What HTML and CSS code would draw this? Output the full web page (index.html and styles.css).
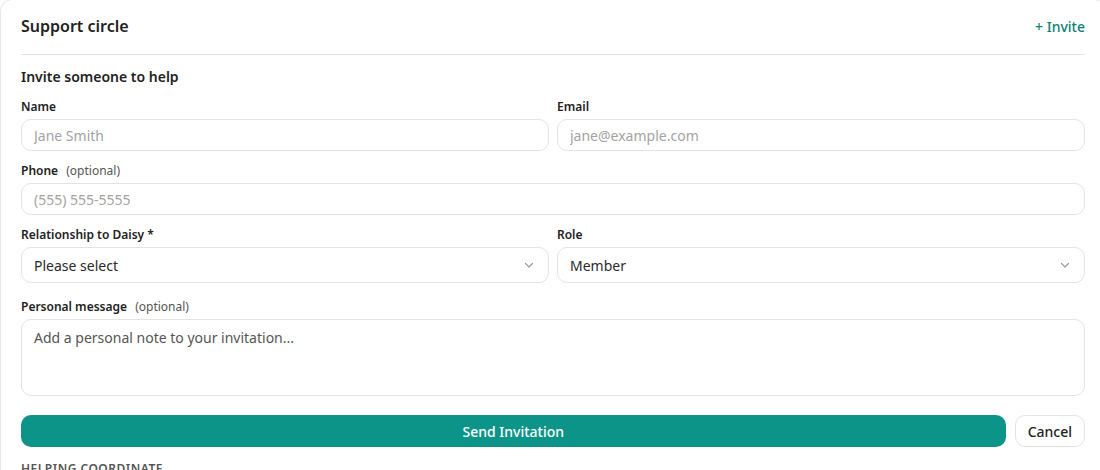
FILE: index.html
```html
<!DOCTYPE html>
<html lang="en">
<head>
    <meta charset="UTF-8">
    <title>Support circle</title>
    <link rel="stylesheet" href="styles.css">
</head>
<body>
    <div class="card">
        <div class="card-head">
            <h2>Support circle</h2>
            <a class="invite-link" href="#">+ Invite</a>
        </div>

        <form class="invite-form">
            <h3>Invite someone to help</h3>

            <div class="row two">
                <div class="field">
                    <label for="name">Name</label>
                    <input id="name" type="text" placeholder="Jane Smith">
                </div>
                <div class="field">
                    <label for="email">Email</label>
                    <input id="email" type="email" placeholder="jane@example.com">
                </div>
            </div>

            <div class="field">
                <label for="phone">Phone <span class="opt">(optional)</span></label>
                <input id="phone" type="tel" placeholder="(555) 555-5555">
            </div>

            <div class="row two selects">
                <div class="field">
                    <label for="rel">Relationship to Daisy *</label>
                    <div class="select">
                        <select id="rel">
                            <option>Please select</option>
                            <option>Family</option>
                            <option>Friend</option>
                        </select>
                        <svg class="chev" width="12" height="12" viewBox="0 0 12 12"><path d="M2.5 4.5 6 8l3.5-3.5" fill="none" stroke="#9a9a9a" stroke-width="1.2" stroke-linecap="round" stroke-linejoin="round"/></svg>
                    </div>
                </div>
                <div class="field">
                    <label for="role">Role</label>
                    <div class="select">
                        <select id="role">
                            <option>Member</option>
                            <option>Coordinator</option>
                        </select>
                        <svg class="chev" width="12" height="12" viewBox="0 0 12 12"><path d="M2.5 4.5 6 8l3.5-3.5" fill="none" stroke="#9a9a9a" stroke-width="1.2" stroke-linecap="round" stroke-linejoin="round"/></svg>
                    </div>
                </div>
            </div>

            <div class="field">
                <label for="msg">Personal message <span class="opt">(optional)</span></label>
                <textarea id="msg" placeholder="Add a personal note to your invitation..."></textarea>
            </div>

            <div class="actions">
                <button type="button" class="btn-send">Send Invitation</button>
                <button type="button" class="btn-cancel">Cancel</button>
            </div>
        </form>

        <div class="section-title">Helping coordinate</div>
    </div>
</body>
</html>
```

FILE: styles.css
```css
html, body {
    margin: 0;
    padding: 0;
    overflow: hidden;
}

body {
    font-family: "Noto Sans", "Open Sans", sans-serif;
    color: #1f1f1f;
    background: #fff;
}

/* card runs past the right edge of the window */
.card {
    width: 1064px;
    padding: 15px 20px 20px;
    border: 1px solid #e6e6e6;
    border-radius: 12px;
    margin-top: -1px;
}

.card-head {
    display: flex;
    justify-content: space-between;
    align-items: center;
    height: 22px;
    padding-bottom: 17px;
    border-bottom: 1px solid #e3e3e3;
}

.card-head h2 {
    margin: 0;
    font-size: 16px;
    font-weight: 600;
    color: #222;
}

.invite-link {
    font-size: 14px;
    font-weight: 500;
    color: #0f7f75;
    text-decoration: none;
}

.invite-form {
    display: flex;
    flex-direction: column;
    gap: 12px;
    padding-top: 12px;
}

.invite-form h3 {
    margin: 0;
    font-size: 14px;
    font-weight: 600;
    line-height: 20px;
    color: #222;
}

.row.two {
    display: grid;
    grid-template-columns: 1fr 1fr;
    gap: 8px;
}

.row.selects {
    margin-bottom: 4px;
}

.field {
    display: flex;
    flex-direction: column;
    gap: 4px;
}

.field label {
    font-size: 12px;
    font-weight: 600;
    line-height: 16px;
    color: #222;
}

.opt {
    font-weight: 400;
    color: #555;
    margin-left: 5px;
}

input, select, textarea {
    font-family: inherit;
    font-size: 14px;
    box-sizing: border-box;
    width: 100%;
    border: 1px solid #e3e3e3;
    border-radius: 10px;
    background: #fff;
    outline: none;
}

input {
    height: 32px;
    padding: 0 12px;
    color: #222;
}

input::placeholder {
    color: #a3a3a3;
}

.select {
    position: relative;
}

select {
    height: 36px;
    padding: 0 12px;
    color: #2a2a2a;
    appearance: none;
    -webkit-appearance: none;
}

.chev {
    position: absolute;
    right: 14px;
    top: 12px;
    pointer-events: none;
}

textarea {
    height: 77px;
    padding: 8px 12px;
    resize: none;
    color: #222;
}

textarea::placeholder {
    color: #555;
}

.actions {
    display: flex;
    gap: 9px;
    margin-top: 7px;
}

.btn-send {
    flex: 1;
    height: 32px;
    border: none;
    border-radius: 10px;
    background: #0d9488;
    color: #fff;
    font-family: inherit;
    font-size: 14px;
    font-weight: 500;
}

.btn-cancel {
    height: 32px;
    padding: 0 12px;
    border: 1px solid #e3e3e3;
    border-radius: 10px;
    background: #fff;
    color: #222;
    font-family: inherit;
    font-size: 14px;
    font-weight: 500;
}

.section-title {
    margin-top: 13px;
    font-size: 12px;
    font-weight: 600;
    letter-spacing: 0.5px;
    text-transform: uppercase;
    color: #555;
}
```
